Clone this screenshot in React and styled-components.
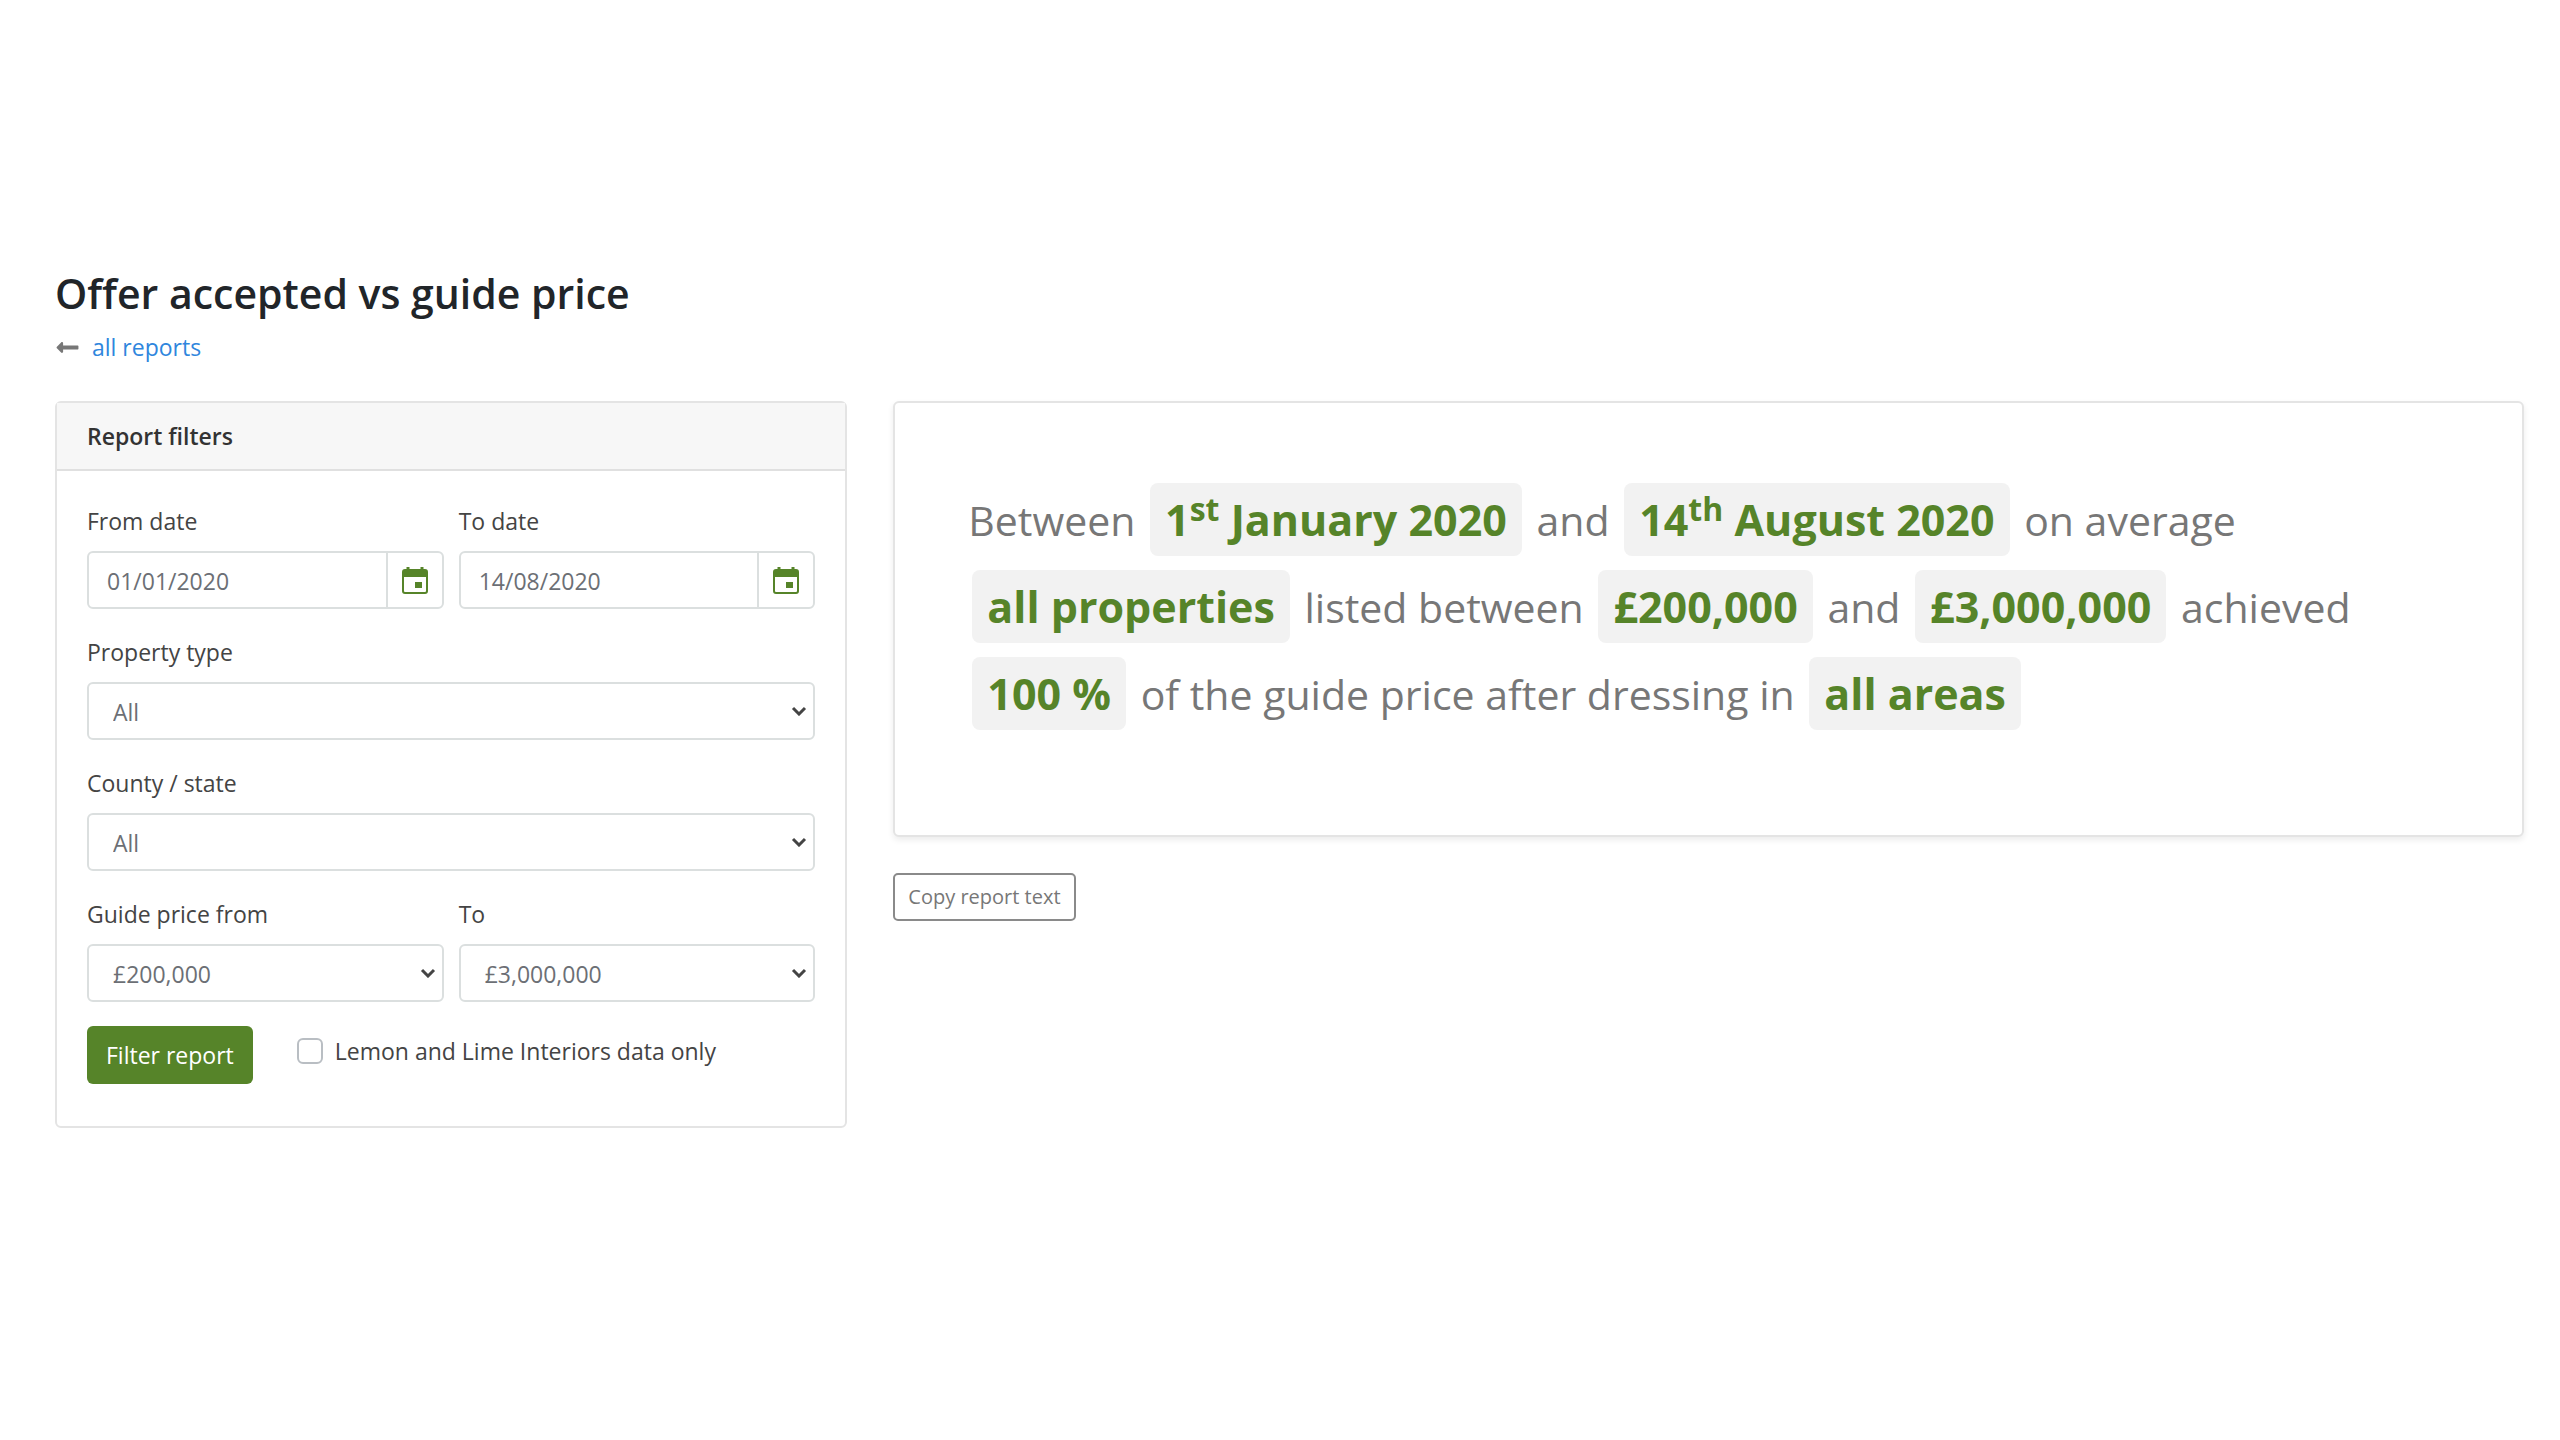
import React, { useState } from "react";
import styled, { createGlobalStyle } from "styled-components";
import { FaLongArrowAltLeft } from "react-icons/fa";

const GlobalStyle = createGlobalStyle`
  * {
    box-sizing: border-box;
  }

  body {
    margin: 0;
    background-color: #fff;
    color: #444;
    font-family: "Open Sans", "Noto Sans", sans-serif;
    font-size: 23px;
    line-height: 38px;
  }

  button, input, select {
    font: inherit;
  }
`;

const Page = styled.main`
  padding: 265px 36px 48px 55px;
`;

const PageTitle = styled.h1`
  margin: 0;
  color: #212529;
  font-size: 41px;
  font-weight: 600;
  line-height: 56px;
`;

const BackNav = styled.nav`
  display: flex;
  align-items: center;
  gap: 12px;
  margin: 7px 0 35px;
  color: #777;
`;

const BackLink = styled.a`
  color: #2f86dd;
  text-decoration: none;

  &:hover {
    text-decoration: underline;
  }
`;

const Columns = styled.div`
  display: grid;
  grid-template-columns: repeat(12, minmax(0, 1fr));
  align-items: start;
  gap: 46px;
`;

const Card = styled.section`
  border: 2px solid #e4e4e4;
  border-radius: 6px;
  background-color: #fff;
`;

const FilterCard = styled(Card)`
  grid-column: span 4;
`;

const CardHeader = styled.h2`
  margin: 0;
  padding: 14px 30px;
  border-bottom: 2px solid #e0e0e0;
  background-color: #f7f7f7;
  color: #333;
  font-size: 23px;
  font-weight: 600;
  line-height: 38px;
`;

const FilterForm = styled.form`
  display: grid;
  grid-template-columns: repeat(2, minmax(0, 1fr));
  gap: 24px 15px;
  padding: 31px 30px 42px;
`;

const Field = styled.div`
  grid-column: ${({ $wide }) => ($wide ? "1 / -1" : "auto")};
`;

const Label = styled.label`
  display: block;
  margin-bottom: 11px;
`;

const InputGroup = styled.div`
  display: flex;
  height: 58px;
  border: 2px solid #dbdfdf;
  border-radius: 6px;
`;

const DateInput = styled.input`
  flex: 1;
  min-width: 0;
  padding: 2px 18px 0;
  border: 0;
  background: none;
  color: #6c6f75;
`;

const CalendarButton = styled.button`
  display: flex;
  align-items: center;
  justify-content: center;
  width: 56px;
  padding: 0;
  border: 0;
  border-left: 2px solid #dbdfdf;
  background: none;
  color: #568429;
  cursor: pointer;
`;

const SelectWrap = styled.div`
  position: relative;
`;

const Select = styled.select`
  display: block;
  width: 100%;
  height: 58px;
  padding: 2px 40px 0 24px;
  appearance: none;
  border: 2px solid #dbdfdf;
  border-radius: 6px;
  background-color: #fff;
  color: #6c6f75;
`;

const SelectArrow = styled.svg`
  position: absolute;
  top: 24px;
  right: 8px;
  pointer-events: none;
`;

const Actions = styled.div`
  display: flex;
  grid-column: 1 / -1;
  align-items: flex-start;
  gap: 44px;
`;

const FilterButton = styled.button`
  height: 58px;
  padding: 0 19px;
  border: 0;
  border-radius: 6px;
  background-color: #568429;
  color: #fff;
  cursor: pointer;
`;

const CheckLabel = styled.label`
  display: flex;
  align-items: center;
  gap: 12px;
  padding-top: 6px;
`;

const Checkbox = styled.input`
  width: 26px;
  height: 26px;
  margin: 0;
  appearance: none;
  border: 2px solid #b9bec3;
  border-radius: 6px;
  background-color: #fff;

  &:checked {
    border-color: #568429;
    background-color: #568429;
  }
`;

const Report = styled.div`
  grid-column: span 8;
`;

const ReportCard = styled(Card)`
  margin-bottom: 36px;
  padding: 74px 73px 97px;
  box-shadow: 0 3px 6px rgba(0, 0, 0, 0.08);
`;

const ReportText = styled.p`
  margin: 0;
  color: #777;
  font-size: 41px;
  line-height: 87px;
`;

const Value = styled.strong`
  display: inline-block;
  margin: 0 4px;
  padding: 0 15px;
  border-radius: 8px;
  background-color: #f2f2f2;
  color: #568429;
  font-size: 43px;
  font-weight: 700;
  line-height: 73px;

  sup {
    font-size: 32px;
    line-height: 0;
  }
`;

const CopyButton = styled.button`
  height: 48px;
  padding: 0 13px;
  border: 2px solid #8a8a8a;
  border-radius: 5px;
  background: none;
  color: #777;
  font-size: 20px;
  cursor: pointer;
`;

const CalendarIcon = () => (
  <svg width="26" height="27" viewBox="0 0 26 27" fill="none" aria-hidden="true">
    <path d="M6 0v4M20 0v4" stroke="currentColor" strokeWidth="3" />
    <rect x="1" y="3" width="24" height="23" rx="2" stroke="currentColor" strokeWidth="2" />
    <path d="M1 3h24v7H1z" fill="currentColor" />
    <path d="M13 15h7v6h-7z" fill="currentColor" />
  </svg>
);

const DateField = ({ id, label, value, onChange }) => (
  <Field>
    <Label htmlFor={id}>{label}</Label>
    <InputGroup>
      <DateInput id={id} type="text" value={value} onChange={(e) => onChange(e.target.value)} />
      <CalendarButton type="button" aria-label={`Choose ${label.toLowerCase()}`}>
        <CalendarIcon />
      </CalendarButton>
    </InputGroup>
  </Field>
);

const SelectField = ({ id, label, options, wide }) => (
  <Field $wide={wide}>
    <Label htmlFor={id}>{label}</Label>
    <SelectWrap>
      <Select id={id}>
        {options.map((option) => (
          <option key={option}>{option}</option>
        ))}
      </Select>
      <SelectArrow width="16" height="10" viewBox="0 0 16 10" fill="none" aria-hidden="true">
        <path d="M2 2l6 6 6-6" stroke="#444" strokeWidth="3" />
      </SelectArrow>
    </SelectWrap>
  </Field>
);

const App = () => {
  const [fromDate, setFromDate] = useState("01/01/2020");
  const [toDate, setToDate] = useState("14/08/2020");

  return (
    <>
      <GlobalStyle />
      <Page>
        <PageTitle>Offer accepted vs guide price</PageTitle>
        <BackNav>
          <FaLongArrowAltLeft size={25} />
          <BackLink href="#reports">all reports</BackLink>
        </BackNav>
        <Columns>
          <FilterCard>
            <CardHeader>Report filters</CardHeader>
            <FilterForm onSubmit={(e) => e.preventDefault()}>
              <DateField id="from" label="From date" value={fromDate} onChange={setFromDate} />
              <DateField id="to" label="To date" value={toDate} onChange={setToDate} />
              <SelectField id="type" label="Property type" options={["All"]} wide />
              <SelectField id="county" label="County / state" options={["All"]} wide />
              <SelectField id="priceFrom" label="Guide price from" options={["£200,000"]} />
              <SelectField id="priceTo" label="To" options={["£3,000,000"]} />
              <Actions>
                <FilterButton type="submit">Filter report</FilterButton>
                <CheckLabel>
                  <Checkbox type="checkbox" />
                  Lemon and Lime Interiors data only
                </CheckLabel>
              </Actions>
            </FilterForm>
          </FilterCard>
          <Report>
            <ReportCard>
              <ReportText>
                Between{" "}
                <Value>
                  1<sup>st</sup> January 2020
                </Value>{" "}
                and{" "}
                <Value>
                  14<sup>th</sup> August 2020
                </Value>{" "}
                on average <Value>all properties</Value> listed between{" "}
                <Value>£200,000</Value> and <Value>£3,000,000</Value> achieved{" "}
                <Value>100 %</Value> of the guide price after dressing in{" "}
                <Value>all areas</Value>
              </ReportText>
            </ReportCard>
            <CopyButton type="button">Copy report text</CopyButton>
          </Report>
        </Columns>
      </Page>
    </>
  );
};

export default App;
